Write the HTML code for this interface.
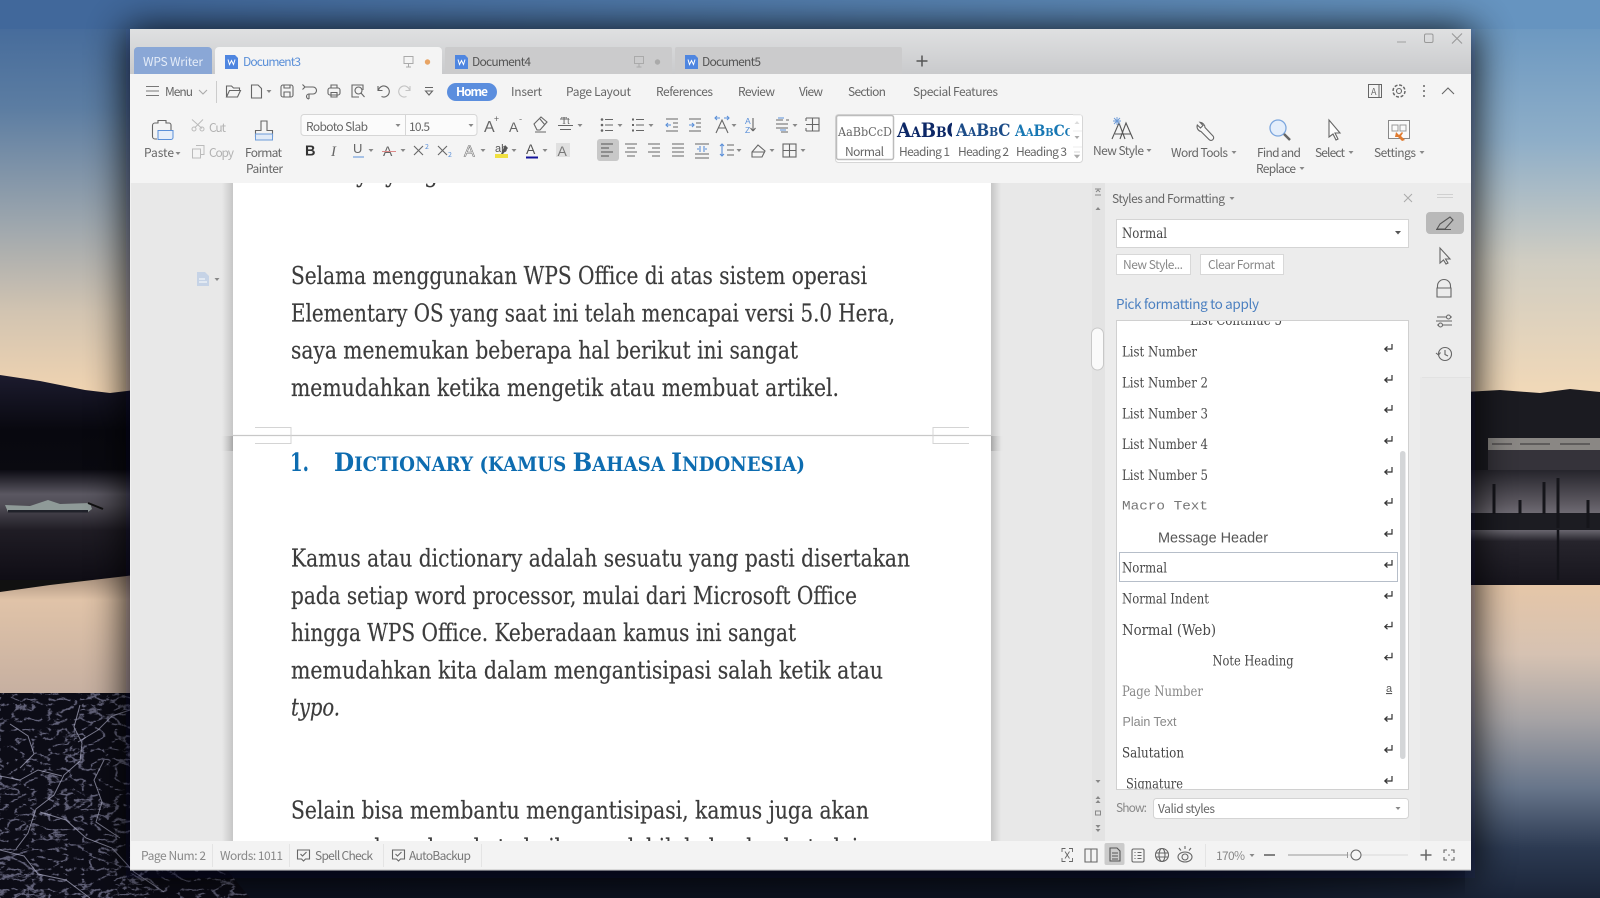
<!DOCTYPE html>
<html><head><meta charset="utf-8"><title>WPS Writer</title>
<style>
html,body{margin:0;padding:0;background:#111;overflow:hidden}
svg{display:block;filter:blur(.3px)}
text{font-family:"Noto Sans CJK SC","Liberation Sans",sans-serif;font-size:12px;fill:#666;white-space:pre}
.g{fill:#b2b2b2}
.d{font-family:"DejaVu Serif","Liberation Serif",serif;font-stretch:condensed;font-size:24px;fill:#3c3c3c;stroke:#3c3c3c;stroke-width:.18}
.s{font-family:"DejaVu Serif","Liberation Serif",serif;font-stretch:condensed;font-size:13.5px;fill:#484848}
.i{fill:none;stroke:#666;stroke-width:1.1}
.b{fill:none;stroke:#5a8fd8;stroke-width:1.1}
</style></head><body>
<svg width="1600" height="898" viewBox="0 0 1600 898" xmlns="http://www.w3.org/2000/svg">
<defs>
<linearGradient id="sl" x1="0" y1="0" x2="0" y2="1"><stop offset="0" stop-color="#3f6699"/><stop offset=".27" stop-color="#5c7da2"/><stop offset=".55" stop-color="#9ba5ad"/><stop offset=".78" stop-color="#d2c4b1"/><stop offset="1" stop-color="#f3d5b1"/></linearGradient>
<linearGradient id="sr" x1="0" y1="0" x2="0" y2="1"><stop offset="0" stop-color="#6493bf"/><stop offset=".35" stop-color="#8eaec8"/><stop offset=".65" stop-color="#d0cdc2"/><stop offset="1" stop-color="#f3d9b7"/></linearGradient>
<linearGradient id="top" x1="0" y1="0" x2="1" y2="0"><stop offset=".085" stop-color="#41689b"/><stop offset=".915" stop-color="#6694c0"/></linearGradient>
<linearGradient id="bot" x1="0" y1="0" x2="1" y2="0"><stop offset="0" stop-color="#0d111f"/><stop offset=".7" stop-color="#0e1524"/><stop offset=".915" stop-color="#1a2438"/></linearGradient>
<linearGradient id="ml" x1="0" y1="0" x2="0" y2="1"><stop offset="0" stop-color="#1c1b2e"/><stop offset=".55" stop-color="#08080f"/><stop offset="1" stop-color="#0a0a10"/></linearGradient>
<linearGradient id="wl" x1="0" y1="0" x2="0" y2="1"><stop offset="0" stop-color="#0c0b13"/><stop offset=".22" stop-color="#5a5761"/><stop offset=".32" stop-color="#504d56"/><stop offset=".55" stop-color="#1f1c24"/><stop offset="1" stop-color="#0f0d15"/></linearGradient>
<linearGradient id="pl" x1="0" y1="0" x2="0" y2="1"><stop offset="0" stop-color="#a48d7a"/><stop offset=".2" stop-color="#e0c3a8"/><stop offset="1" stop-color="#c4aea0"/></linearGradient>
<linearGradient id="wr" x1="0" y1="0" x2="0" y2="1"><stop offset="0" stop-color="#26252c"/><stop offset=".3" stop-color="#5f5b63"/><stop offset=".48" stop-color="#85828b"/><stop offset=".62" stop-color="#26242c"/><stop offset="1" stop-color="#17151d"/></linearGradient>
<linearGradient id="pr" x1="0" y1="0" x2="0" y2="1"><stop offset="0" stop-color="#e5c6a8"/><stop offset=".22" stop-color="#d6c2b2"/><stop offset=".43" stop-color="#a6a3a5"/><stop offset=".65" stop-color="#67758a"/><stop offset=".84" stop-color="#2c3a52"/><stop offset="1" stop-color="#1a2438"/></linearGradient>
<linearGradient id="tb" x1="0" y1="0" x2="0" y2="1"><stop offset="0" stop-color="#dfe0e1"/><stop offset="1" stop-color="#c9cacc"/></linearGradient>
<linearGradient id="ps" x1="0" y1="0" x2="1" y2="0"><stop offset="0" stop-color="#e8e8e8"/><stop offset="1" stop-color="#c6c6c6"/></linearGradient>
<linearGradient id="ps2" x1="1" y1="0" x2="0" y2="0"><stop offset="0" stop-color="#e8e8e8"/><stop offset="1" stop-color="#c6c6c6"/></linearGradient>
<linearGradient id="ps3" x1="0" y1="0" x2="1" y2="0"><stop offset="0" stop-color="#e8e8e8" stop-opacity="0"/><stop offset="1" stop-color="#a6a6a6"/></linearGradient>
<linearGradient id="ps4" x1="1" y1="0" x2="0" y2="0"><stop offset="0" stop-color="#e8e8e8" stop-opacity="0"/><stop offset="1" stop-color="#a6a6a6"/></linearGradient>
<filter id="bl" x="-10%" y="-10%" width="120%" height="120%"><feGaussianBlur stdDeviation="20"/></filter>
<filter id="cr" x="0" y="0" width="100%" height="100%" color-interpolation-filters="sRGB"><feTurbulence type="turbulence" baseFrequency=".06 .1" numOctaves="4" seed="7"/><feColorMatrix type="matrix" values="0 0 0 0 .72  0 0 0 0 .72  0 0 0 0 .86  -9 0 0 0 2"/></filter>
<clipPath id="cd"><rect x="233" y="183" width="758" height="658"/></clipPath>
<clipPath id="cl"><rect x="1117" y="321" width="291" height="468"/></clipPath>
<clipPath id="g1"><rect x="896" y="116" width="56" height="26"/></clipPath>
<clipPath id="g2"><rect x="955" y="116" width="55" height="26"/></clipPath>
<clipPath id="g3"><rect x="1014" y="116" width="56" height="26"/></clipPath>
<clipPath id="gr"><polygon points="0,693 130,693 170,800 250,898 0,898"/></clipPath>
<path id="c" d="M-2.5 -1 h5 l-2.5 3 z" fill="#888"/>
<path id="r" d="M4 -5 v5 h-7 M-.5 -2.500 l-2.700 2.500 l2.700 2.500" fill="none" stroke="#333" stroke-width="1.200"/>
</defs>

<!-- wallpaper -->
<rect x="0" y="0" width="135" height="400" fill="url(#sl)"/>
<rect x="1465" y="0" width="135" height="400" fill="url(#sr)"/>
<rect x="0" y="0" width="1600" height="29" fill="url(#top)"/>
<rect x="0" y="865" width="1600" height="33" fill="url(#bot)"/>
<polygon points="0,375 40,381 85,390 110,393 135,390 135,475 0,475" fill="url(#ml)"/>
<rect x="0" y="470" width="135" height="110" fill="url(#wl)"/>
<polygon points="0,592 50,585 135,575 135,700 0,700" fill="url(#pl)"/>
<rect x="0" y="693" width="260" height="205" fill="#0c0c16" clip-path="url(#gr)"/>
<rect x="0" y="693" width="260" height="205" filter="url(#cr)" clip-path="url(#gr)" opacity=".5"/>
<g fill="none" stroke="#b9b9d2" stroke-width="1" opacity=".65">
<path d="M80 705 l-6 22 l8 16 l-2 18 l-16 14 l-10 20 l-18 14 l-8 24 l-12 16"/>
<path d="M78 742 l20 -12 l14 -14 l18 -6"/>
<path d="M62 776 l-24 -6 l-18 10 l-20 -4"/>
<path d="M40 812 l26 8 l20 18 l26 10 l22 24 l30 20"/>
<path d="M0 850 l24 6 l14 18 l28 6 l24 18"/>
<path d="M104 760 l-10 20 l8 22 l-6 20 l24 16"/>
<path d="M10 724 l18 12 l6 18 l-14 14"/>
</g>
<polygon points="5,505 30,506 48,500 60,504 90,503 92,509 88,512 8,512" fill="#8f9a98"/>
<rect x="8" y="510" width="80" height="2.500" fill="#20222a"/>
<path d="M88 503 L103 509" stroke="#111" stroke-width="2"/>
<polygon points="1465,392 1500,390 1540,393 1570,389 1600,392 1600,480 1465,480" fill="#1b1b21"/>
<rect x="1465" y="470" width="135" height="115" fill="url(#wr)"/>
<rect x="1488" y="438" width="112" height="12" fill="#8a8784"/>
<path d="M1492 444 h20 M1520 444 h30 M1560 444 h30" stroke="#5f5c5c" stroke-width="2"/>
<rect x="1488" y="450" width="112" height="20" fill="#35333a"/>
<rect x="1465" y="513" width="135" height="17" fill="#1c1c22"/>
<path d="M1494 484 v30 M1544 482 v32 M1558 478 v50 M1588 500 v28 M1520 500 v14" stroke="#15151a" stroke-width="3"/>
<path d="M1558 530 v50" stroke="#121218" stroke-width="2.500"/>
<rect x="1465" y="585" width="135" height="313" fill="url(#pr)"/>
<rect x="126" y="29" width="1349" height="849" fill="#01040c" opacity=".9" filter="url(#bl)"/>

<!-- window -->
<rect x="130" y="29" width="1341" height="841" fill="#f1f1f1"/>
<rect x="130" y="29" width="1341" height="45" fill="url(#tb)"/>
<path d="M1397 42 h9" stroke="#aaa" stroke-width="1.200"/>
<rect x="1424.500" y="34" width="8.500" height="8.500" rx="1.500" fill="none" stroke="#999"/>
<path d="M1452 33.500 l10 10 M1462 33.500 l-10 10" stroke="#999" stroke-width="1.100"/>

<!-- tabs -->
<path d="M134 74 V51 a4 4 0 0 1 4 -4 h70 a4 4 0 0 1 4 4 V74 z" fill="#8aa7d6"/>
<text x="143" y="66" textLength="60" style="fill:#e4ecf8">WPS Writer</text>
<path d="M215 74 V51 a4 4 0 0 1 4 -4 h219 a4 4 0 0 1 4 4 V74 z" fill="#f4f4f4"/>
<path d="M225 55 h10 l3 3 v11 h-13 z" fill="#4f86e0"/><path d="M228 59.500 l1.500 5 l2 -4 l2 4 l1.500 -5" fill="none" stroke="#fff" stroke-width="1"/>
<text x="243" y="66" textLength="58" style="fill:#5a8fd8">Document3</text>
<path d="M404 56.500 h9 v7 h-9 z M408.500 63.500 v3 M406 67 h5" fill="none" stroke="#aaa"/>
<circle cx="427.500" cy="62" r="2.700" fill="#e8a464"/>
<path d="M445 74 V49 a2 2 0 0 1 2 -2 h223 a2 2 0 0 1 2 2 V74 z" fill="#cbcbcc"/>
<path d="M455 55 h10 l3 3 v11 h-13 z" fill="#4f86e0"/><path d="M458 59.500 l1.500 5 l2 -4 l2 4 l1.500 -5" fill="none" stroke="#fff" stroke-width="1"/>
<text x="472" y="66" textLength="59" style="fill:#555">Document4</text>
<path d="M634.500 56.500 h9 v7 h-9 z M639 63.500 v3 M636.500 67 h5" fill="none" stroke="#aaa"/>
<circle cx="657.500" cy="62" r="2.700" fill="#aaa"/>
<path d="M675 74 V49 a2 2 0 0 1 2 -2 h223 a2 2 0 0 1 2 2 V74 z" fill="#cbcbcc"/>
<path d="M685 55 h10 l3 3 v11 h-13 z" fill="#4f86e0"/><path d="M688 59.500 l1.500 5 l2 -4 l2 4 l1.500 -5" fill="none" stroke="#fff" stroke-width="1"/>
<text x="702" y="66" textLength="59" style="fill:#555">Document5</text>
<path d="M916.500 61 h11 M922 55.500 v11" stroke="#555" stroke-width="1.500"/>

<!-- ribbon -->
<rect x="130" y="74" width="1341" height="109" fill="#f4f4f4"/>
<path d="M146 86.500 h13 M146 91 h13 M146 95.500 h13" stroke="#777" stroke-width="1"/>
<text x="165" y="96" textLength="28">Menu</text>
<path d="M199 90 l4 4 l4 -4" class="i" style="stroke:#aaa"/>
<path d="M216.500 81 v22" stroke="#ccc"/>
<g class="i">
<path d="M226.500 97 V86 h5 l2 2 h6 v2.500 M226.500 97 h11 l3 -6.500 h-11 z"/>
<path d="M251.500 85 h6.500 l3.500 3.500 V98 h-10 z"/>
<rect x="281" y="85" width="12" height="12" rx="2"/><path d="M284 85 v3 h6 v-3 M284 97 v-5 h6 v5"/>
<path d="M305 87 h8 a3.500 3.500 0 0 1 0 7 h-4 v5 M302.500 84.500 l2.500 2.500 l-2.500 2.500 M309 94 a2.500 2.500 0 1 0 0 5"/>
<rect x="328" y="88" width="12" height="7" rx="2"/><path d="M331 88 v-3 h6 v3 M331 92.500 h6 v4.500 h-6 z"/>
<path d="M363 90 v-5 h-11 v12 h7"/><circle cx="358.500" cy="90.500" r="3.500"/><path d="M361 93 l3.500 4"/>
<path d="M378 86 v4.500 h4.500 M378.500 90 a5.500 5.500 0 1 1 3 6.500"/>
<path d="M410 86 v4.500 h-4.500 M409.500 90 a5.500 5.500 0 1 0 -3 6.500" style="stroke:#c4c4c4"/>
<path d="M425 87.500 h8 M425.500 91 l3.500 4 l3.500 -4 z"/>
</g>
<use href="#c" x="269" y="91"/>
<rect x="447" y="83" width="50" height="18" rx="9" fill="#5b8ede"/>
<text x="456" y="96" textLength="32" style="fill:#fff;font-weight:700">Home</text>
<text x="511" y="96" textLength="31">Insert</text>
<text x="566" y="96" textLength="65">Page Layout</text>
<text x="656" y="96" textLength="57">References</text>
<text x="738" y="96" textLength="37">Review</text>
<text x="799" y="96" textLength="24">View</text>
<text x="848" y="96" textLength="38">Section</text>
<text x="913" y="96" textLength="85">Special Features</text>
<!-- top right -->
<rect x="1368.500" y="84.500" width="13" height="13" fill="none" stroke="#666"/><path d="M1379 84.500 v13" stroke="#666"/>
<text x="1371" y="95" style="font-size:9px">A</text>
<circle cx="1399" cy="91" r="2.500" class="i"/><circle cx="1399" cy="91" r="6" fill="none" stroke="#666" stroke-dasharray="3 1.700" stroke-width="1.500"/>
<circle cx="1424" cy="86" r="1" fill="#666"/><circle cx="1424" cy="91" r="1" fill="#666"/><circle cx="1424" cy="96" r="1" fill="#666"/>
<path d="M1442 94 l6 -6 l6 6" class="i"/>

<!-- clipboard -->
<path d="M155 123 h3 v-2.500 h8 v2.500 h3 a2 2 0 0 1 2 2 v5 M155 123 a2.500 2.500 0 0 0 -2.500 2.500 v11 a2.500 2.500 0 0 0 2.500 2.500 h2" class="i"/>
<path d="M158 130.500 h15 v7 a2 2 0 0 1 -2 2 h-13 z" fill="#e6eef9" stroke="#5a8fd8"/>
<text x="144" y="157" textLength="30">Paste</text><use href="#c" x="178" y="153"/>
<path d="M192 119.500 l10 9 M203 119.500 l-8 8" stroke="#bbb" fill="none"/><circle cx="194" cy="129" r="2" fill="none" stroke="#bbb"/><circle cx="202" cy="129" r="2" fill="none" stroke="#bbb"/>
<text x="209" y="132" textLength="17" class="g">Cut</text>
<path d="M196 145.500 h8 v9 h-3 M192.500 149 h8 v9 h-8 z" fill="none" stroke="#bbb"/>
<text x="209" y="157" textLength="25" class="g">Copy</text>
<path d="M261 121 h6 v9.500 h5.500 v6 h-17 v-6 h5.500 z" class="i"/>
<path d="M255.500 134 h17 v6 h-17 z" fill="#e0eaf7" stroke="#6d9bd8"/>
<text x="245" y="157" textLength="37">Format</text>
<text x="246" y="173" textLength="37">Painter</text>

<!-- font row -->
<rect x="301" y="114.500" width="176" height="21" rx="3" fill="#fbfbfb" stroke="#d6d6d6"/><path d="M405.500 115 v20" stroke="#d6d6d6"/>
<text x="306" y="131" textLength="62">Roboto Slab</text><use href="#c" x="398" y="125"/>
<text x="409" y="131" textLength="21">10.5</text><use href="#c" x="471" y="125"/>
<text x="484" y="132" style="font-size:16px;font-family:'Liberation Sans'">A</text><text x="494" y="122" style="font-size:9px">+</text>
<text x="509" y="132" style="font-size:14px;font-family:'Liberation Sans'">A</text><text x="519" y="122" style="font-size:9px">-</text>
<path d="M534 124 l7 -7 l6 5 l-7 8 h-3 z M540 119 l5 6 M535 132 h11" class="i"/>
<text x="561" y="124" style="font-size:10px;font-family:'Liberation Serif'">Tt</text><path d="M558 125.500 h15 M560 129.500 h11 M560 119 h9" class="i" style="stroke-width:.9"/><use href="#c" x="580" y="125"/>
<text x="305" y="155.500" style="font-size:14.500px;font-weight:700;fill:#333;font-family:'Liberation Sans'">B</text>
<text x="331" y="156" style="font-size:15px;font-style:italic;font-family:'Liberation Serif'">I</text>
<text x="353" y="153" style="font-size:13px;font-family:'Liberation Sans'">U</text><path d="M353 157 h11" stroke="#5a8fd8"/><use href="#c" x="371" y="150"/>
<text x="383" y="156" style="font-size:14px;font-family:'Liberation Sans'">A</text><path d="M382 151.500 h14" stroke="#d88"/><use href="#c" x="403" y="150"/>
<path d="M414 146 l9 9 M423 146 l-9 9" class="i"/><text x="425" y="149" style="font-size:7px;fill:#5a8fd8">2</text>
<path d="M438 146 l9 9 M447 146 l-9 9" class="i"/><text x="448" y="157" style="font-size:7px;fill:#5a8fd8">2</text>
<text x="464" y="156.500" style="font-size:16px;font-family:'Liberation Sans';fill:#fafafa;stroke:#777;stroke-width:.6">A</text><use href="#c" x="483" y="150"/>
<text x="495" y="152" style="font-size:11px;font-family:'Liberation Sans';fill:#555">ab</text><path d="M495 154 h13 v4 h-13 z" fill="#f0e040"/><path d="M505 145 l3 3 l-5 6 h-2 z" fill="#555"/><use href="#c" x="514" y="150"/>
<text x="526" y="154" style="font-size:14px;font-family:'Liberation Sans';fill:#555">A</text><path d="M526 156.500 h12 v2 h-12 z" fill="#12129a"/><use href="#c" x="545" y="150"/>
<rect x="556" y="143" width="14" height="14" fill="#e0e0e0"/><text x="557.500" y="156" style="font-size:14px;font-family:'Liberation Sans';fill:#777">A</text>

<!-- paragraph row 1 -->
<g class="i">
<path d="M605 119.500 h8 M605 125 h8 M605 130.500 h8"/>
<path d="M636 119.500 h8 M636 125 h8 M636 130.500 h8"/>
<path d="M666 119 h12 M673 123 h5 M673 127 h5 M666 131 h12"/>
<path d="M689 119 h12 M696 123 h5 M696 127 h5 M689 131 h12"/>
<path d="M716 133 l6 -13 l6 13 M718.500 128 h7"/>
<path d="M753 118 v13 M753 131 l-2.500 -3 M753 131 l2.500 -3"/>
<path d="M776 120 h7 M786 120 h3 M776 124 h12 M776 128 h12 M781 132 h7"/>
<path d="M806 118 h13 v13 h-13 M812.500 118 v13 M806 118 v3 M806 128 v3 M806 124.500 h13"/>
<!-- row 2 -->
<path d="M625 144 h12 M627 148 h8 M625 152 h12 M627 156 h8"/>
<path d="M648 144 h12 M652 148 h8 M648 152 h12 M652 156 h8"/>
<path d="M672 144 h12 M672 148 h12 M672 152 h12 M672 156 h12"/>
<path d="M695 144 h14 M695 154 h14 M695 158 h14"/>
<path d="M727 145 h7 M727 150 h7 M727 155 h7"/>
<path d="M752 152 l6 -7 l7 6 l-3 6 h-10 z M752 152 h13"/>
<rect x="783" y="144" width="13" height="13"/><path d="M789.500 144 v13 M783 150.500 h13"/>
</g>
<g class="b">
<path d="M666 125 h5 M668 123 l-2 2 l2 2"/>
<path d="M694 125 h-5 M692 123 l2 2 l-2 2"/>
<path d="M715 118 h5 M717 116 l-2 2 l2 2 M729 118 h-5 M727 116 l2 2 l-2 2"/>
<path d="M778 118 h6 M786 130 h-6"/>
<path d="M697 149 h2 M705 149 h2 M700 146 v6 M704 146 v6"/>
<path d="M722 144 v12 M720 146 l2 -2 l2 2 M720 154 l2 2 l2 -2"/>
</g>
<text x="745" y="124" style="font-size:8.500px;fill:#5a8fd8;font-family:'Liberation Sans'">A</text><text x="745" y="133" style="font-size:8.500px;fill:#5a8fd8;font-family:'Liberation Sans'">Z</text>
<g fill="#666"><circle cx="602" cy="119.500" r="1.300"/><circle cx="602" cy="125" r="1.300"/><circle cx="602" cy="130.500" r="1.300"/><rect x="632" y="118.500" width="2" height="2"/><rect x="632" y="124" width="2" height="2"/><rect x="632" y="129.500" width="2" height="2"/></g>
<use href="#c" x="620" y="125"/><use href="#c" x="651" y="125"/><use href="#c" x="734" y="125"/><use href="#c" x="795" y="125"/><use href="#c" x="739" y="150"/><use href="#c" x="772" y="150"/><use href="#c" x="803" y="150"/>
<rect x="597" y="139" width="22" height="22" rx="3" fill="#c8c8c8"/>
<path d="M601 144 h12 M601 148 h8 M601 152 h12 M601 156 h8" fill="none" stroke="#555" stroke-width="1.100"/>

<!-- gallery -->
<rect x="835.500" y="114.500" width="247" height="48" rx="3" fill="#fff" stroke="#d6d6d6"/>
<rect x="836.500" y="115.500" width="57" height="44" rx="2" fill="#fff" stroke="#bcbcbc" stroke-width="1.500"/>
<text x="838" y="136" textLength="54" lengthAdjust="spacingAndGlyphs" class="s" style="font-size:12.500px;fill:#666">AaBbCcD</text>
<text x="845" y="156" textLength="39">Normal</text>
<g clip-path="url(#g1)"><text x="897" y="137" class="s" style="font-size:20px;font-weight:700;fill:#0c2766;font-variant:small-caps">AaBbCc</text></g>
<g clip-path="url(#g2)"><text x="956" y="136" class="s" style="font-size:17px;font-weight:700;fill:#1c4c88;font-variant:small-caps">AaBbCc</text></g>
<g clip-path="url(#g3)"><text x="1015" y="136" class="s" style="font-size:15.500px;font-weight:700;fill:#1878b4;font-variant:small-caps">AaBbCc</text></g>
<text x="899" y="156" textLength="51">Heading 1</text>
<text x="958" y="156" textLength="51">Heading 2</text>
<text x="1016" y="156" textLength="51">Heading 3</text>
<path d="M1073 115 h9 M1073 131 h9 M1073 147 h9" stroke="#eee"/>
<path d="M1074.500 124 l2.500 -3 l2.500 3 z" fill="#ddd"/><path d="M1074.500 136 l2.500 3 l2.500 -3 z" fill="#aaa"/><path d="M1074 152 h6 M1074.500 155 l2.500 3 l2.500 -3 z" fill="#aaa" stroke="#aaa" stroke-width=".6"/>

<!-- right ribbon -->
<path d="M1112 139 l7 -16 l6 16 M1115 134 h8 M1120 139 l6 -16 l7 16 M1122 134 h9" fill="none" stroke="#555" stroke-width="1.100"/>
<path d="M1117 117 v8 M1113 121 h8 M1114 118 l6 6 M1120 118 l-6 6" stroke="#6d9bd8" stroke-width=".9"/>
<text x="1093" y="155" textLength="51">New Style</text><use href="#c" x="1149" y="150"/>
<path d="M1200 122.300 L1203 125.500 L1200.500 128 L1197.300 125 A5 5 0 0 0 1201 131.500 L1209 139.500 A2.500 2.500 0 0 0 1213 136 L1205 127.500 A5.500 5.500 0 0 0 1200 122.300 z" fill="#f8f8f8" stroke="#666" stroke-width="1.100"/>
<text x="1171" y="157" textLength="57">Word Tools</text><use href="#c" x="1234" y="152"/>
<circle cx="1278" cy="128" r="8" fill="#e4eefb" stroke="#7ba6de" stroke-width="1.300"/><path d="M1284 134 l6 6" stroke="#666" stroke-width="2.500"/>
<text x="1257" y="157" textLength="44">Find and</text>
<text x="1256" y="173" textLength="40">Replace</text><use href="#c" x="1302" y="168"/>
<path d="M1329 120 l0 17 l4 -3 l3 6 l2 -1 l-3 -6 l5 0 z" fill="#fdfdfd" stroke="#666" stroke-width="1.100"/>
<text x="1315" y="157" textLength="30">Select</text><use href="#c" x="1351" y="152"/>
<rect x="1388.500" y="120.500" width="21" height="18" fill="#fafafa" stroke="#888"/><path d="M1392 125 h6 v6 h-6 z M1400 125 h6 v6 h-6 z" fill="none" stroke="#999"/>
<path d="M1396 132 l3 3 l3 -3 l1 1 l-2 3 l4 4 l-3 1 l-4 -4 h-3 z" fill="#e07b30"/>
<text x="1374" y="157" textLength="42">Settings</text><use href="#c" x="1422" y="152"/>

<!-- document area -->
<rect x="131" y="183" width="974" height="658" fill="#e8e8e8"/>
<rect x="222" y="183" width="11" height="658" fill="url(#ps)"/>
<rect x="991" y="183" width="10" height="658" fill="url(#ps2)"/>
<rect x="220" y="436" width="13" height="15" fill="url(#ps3)"/>
<rect x="991" y="436" width="13" height="15" fill="url(#ps4)"/>
<rect x="233" y="183" width="758" height="658" fill="#fff"/>
<path d="M197 272 h8 l4 4 v10 h-12 z" fill="#c6d3e6"/><path d="M199 279 h6 M199 282 h8" stroke="#fff"/>
<use href="#c" x="217" y="279"/>
<path d="M233 435.500 H991" stroke="#c8c8c8" stroke-width="1.200"/>
<path d="M255 427.500 H291 V443.500 H255 M969 427.500 H933 V443.500 H969" fill="none" stroke="#d4d4d4"/>
<g clip-path="url(#cd)">
<text class="d" x="385" y="182">y</text><text class="d" x="424" y="182">g</text><text class="d" x="356" y="182">y</text>
<text class="d" x="291" y="284" textLength="576" lengthAdjust="spacingAndGlyphs">Selama menggunakan WPS Office di atas sistem operasi</text>
<text class="d" x="291" y="321.300" textLength="604" lengthAdjust="spacingAndGlyphs">Elementary OS yang saat ini telah mencapai versi 5.0 Hera,</text>
<text class="d" x="291" y="358.600" textLength="507" lengthAdjust="spacingAndGlyphs">saya menemukan beberapa hal berikut ini sangat</text>
<text class="d" x="291" y="396" textLength="548" lengthAdjust="spacingAndGlyphs">memudahkan ketika mengetik atau membuat artikel.</text>
<text class="d" x="290" y="471" style="font-weight:700;fill:#0d6cb0;stroke:none;font-size:25px" textLength="19" lengthAdjust="spacingAndGlyphs">1.</text>
<text class="d" x="334" y="471" textLength="471" lengthAdjust="spacingAndGlyphs" style="font-weight:700;fill:#0d6cb0;stroke:none;text-transform:uppercase;font-size:25.500px">D<tspan style="font-size:20px">ictionary (kamus </tspan>B<tspan style="font-size:20px">ahasa </tspan>I<tspan style="font-size:20px">ndonesia)</tspan></text>
<text class="d" x="291" y="566.500" textLength="619" lengthAdjust="spacingAndGlyphs">Kamus atau dictionary adalah sesuatu yang pasti disertakan</text>
<text class="d" x="291" y="603.800" textLength="566" lengthAdjust="spacingAndGlyphs">pada setiap word processor, mulai dari Microsoft Office</text>
<text class="d" x="291" y="641" textLength="505" lengthAdjust="spacingAndGlyphs">hingga WPS Office. Keberadaan kamus ini sangat</text>
<text class="d" x="291" y="678.400" textLength="592" lengthAdjust="spacingAndGlyphs">memudahkan kita dalam mengantisipasi salah ketik atau</text>
<text class="d" x="291" y="715.700" textLength="49" lengthAdjust="spacingAndGlyphs" style="font-style:italic">typo.</text>
<text class="d" x="291" y="818.500" textLength="578" lengthAdjust="spacingAndGlyphs">Selain bisa membantu mengantisipasi, kamus juga akan</text>
<text class="d" x="291" y="855.800" textLength="580" lengthAdjust="spacingAndGlyphs">memperkaya kosakata baik yang lebih baku dan kata lain</text>
</g>

<!-- doc scrollbar -->
<rect x="1092" y="183" width="13" height="658" fill="#e3e3e3"/>
<rect x="1091.500" y="328" width="12" height="42" rx="6" fill="#fafafa" stroke="#c8c8c8"/>
<path d="M1095 189 h6 M1096 192 l2 -2 l2 2 M1095 195 h6" stroke="#888" fill="none"/>
<path d="M1095.500 210 l2.500 -3 l2.500 3 z" fill="#888"/><path d="M1095.500 780 l2.500 3 l2.500 -3 z" fill="#888"/>
<path d="M1095.500 799 l2.500 -3 l2.500 3 z M1095.500 803 l2.500 -3 l2.500 3 z" fill="#888"/>
<rect x="1095.500" y="811" width="5" height="4" fill="none" stroke="#888"/>
<path d="M1095.500 825 l2.500 3 l2.500 -3 z M1095.500 829 l2.500 3 l2.500 -3 z" fill="#888"/>

<!-- side panel -->
<rect x="1105" y="183" width="315" height="658" fill="#ececec"/>
<text x="1112" y="203" textLength="113">Styles and Formatting</text><use href="#c" x="1232" y="198"/>
<path d="M1404 194 l8 8 M1412 194 l-8 8" stroke="#aaa" stroke-width="1"/>
<rect x="1116.500" y="219.500" width="292" height="28" fill="#fff" stroke="#d4d4d4"/>
<text class="s" x="1122" y="238" textLength="45" lengthAdjust="spacingAndGlyphs">Normal</text>
<path d="M1395 231 h6 l-3 3.500 z" fill="#555"/>
<rect x="1116.500" y="254.500" width="74" height="20" fill="#fff" stroke="#d8d8d8"/>
<text x="1123" y="269" textLength="60" style="fill:#888">New Style...</text>
<rect x="1200.500" y="254.500" width="83" height="20" fill="#fff" stroke="#d8d8d8"/>
<text x="1208" y="269" textLength="67" style="fill:#888">Clear Format</text>
<text x="1116" y="309" textLength="143" style="font-size:13.500px;fill:#4a7fc0">Pick formatting to apply</text>
<rect x="1116.500" y="320.500" width="292" height="469" fill="#fff" stroke="#d0d0d0"/>
<g clip-path="url(#cl)">
<text class="s" x="1190" y="325" textLength="92" lengthAdjust="spacingAndGlyphs">List Continue 5</text>
<text class="s" x="1122" y="356.700" textLength="75" lengthAdjust="spacingAndGlyphs">List Number</text>
<text class="s" x="1122" y="387.500" textLength="86" lengthAdjust="spacingAndGlyphs">List Number 2</text>
<text class="s" x="1122" y="418.300" textLength="86" lengthAdjust="spacingAndGlyphs">List Number 3</text>
<text class="s" x="1122" y="449.200" textLength="86" lengthAdjust="spacingAndGlyphs">List Number 4</text>
<text class="s" x="1122" y="480" textLength="86" lengthAdjust="spacingAndGlyphs">List Number 5</text>
<text x="1122" y="509.500" textLength="86" lengthAdjust="spacingAndGlyphs" style="font-family:'Liberation Mono';font-size:13px;fill:#777">Macro Text</text>
<text x="1158" y="542.500" textLength="110" lengthAdjust="spacingAndGlyphs" style="font-family:'Liberation Sans';font-size:14.500px;fill:#555">Message Header</text>
<text class="s" x="1122" y="572.700" textLength="45" lengthAdjust="spacingAndGlyphs">Normal</text>
<text class="s" x="1122" y="603.700" textLength="87" lengthAdjust="spacingAndGlyphs">Normal Indent</text>
<text class="s" x="1122" y="634.800" textLength="94" lengthAdjust="spacingAndGlyphs" style="font-size:15px">Normal (Web)</text>
<text class="s" x="1212.500" y="665.300" textLength="81" lengthAdjust="spacingAndGlyphs">Note Heading</text>
<text class="s" x="1122" y="696" textLength="81" lengthAdjust="spacingAndGlyphs" style="fill:#888">Page Number</text>
<text x="1122.500" y="726" textLength="54" lengthAdjust="spacingAndGlyphs" style="font-family:'Liberation Sans';font-size:13px;fill:#888">Plain Text</text>
<text class="s" x="1122" y="757.700" textLength="62" lengthAdjust="spacingAndGlyphs" style="fill:#444">Salutation</text>
<text class="s" x="1126" y="788.500" textLength="57" lengthAdjust="spacingAndGlyphs">Signature</text>
</g>
<rect x="1119.500" y="552.500" width="278" height="29" fill="none" stroke="#b6bec9"/>
<g transform="translate(1388,0)">
<use href="#r" y="349"/><use href="#r" y="380"/><use href="#r" y="410"/><use href="#r" y="441"/><use href="#r" y="472"/><use href="#r" y="503"/><use href="#r" y="534"/><use href="#r" y="565"/><use href="#r" y="596"/><use href="#r" y="626.700"/><use href="#r" y="657.700"/><use href="#r" y="719"/><use href="#r" y="750"/><use href="#r" y="781"/>
</g>
<text x="1386" y="692" style="font-size:11px;fill:#555;text-decoration:underline;font-family:'Liberation Sans'">a</text>
<rect x="1400" y="451" width="5.500" height="308" rx="2.700" fill="#d4d6d8"/>
<text x="1116" y="812" textLength="31" style="fill:#888">Show:</text>
<rect x="1153.500" y="798.500" width="255" height="20" rx="3" fill="#fff" stroke="#d4d4d4"/>
<text x="1158" y="813" textLength="57">Valid styles</text><use href="#c" x="1398" y="808"/>

<!-- right bar -->
<rect x="1420" y="183" width="51" height="658" fill="#e9e9e9"/>
<rect x="1420" y="183" width="51" height="194" fill="#ececec"/><path d="M1422 377.500 h48" stroke="#e2e2e2"/>
<path d="M1437 194.500 h16 M1437 197.500 h16" stroke="#d0d0d0"/>
<rect x="1426" y="212" width="38" height="22" rx="4" fill="#b9b9b9"/>
<g class="i" style="stroke:#555">
<path d="M1437 229 l3 -5 l10 -7 l3 3 l-8 9 z M1436 229.500 h15"/>
<path d="M1440 248 l0 15 l3.500 -3 l2.500 4 l2 -1 l-2.500 -4 h4.500 z" style="stroke:#666"/>
<path d="M1437.500 288 v-2 a6.500 6.500 0 0 1 13 0 v2 M1437 288 h14 v9 h-14 z" style="stroke:#666"/>
<path d="M1437 317 h9 M1451 317 h1 M1437 325 h1 M1443 325 h9 M1436 321 h16" style="stroke:#666"/>
<circle cx="1448.500" cy="317" r="2" style="stroke:#666"/><circle cx="1440.500" cy="325" r="2" style="stroke:#666"/>
<circle cx="1445" cy="354" r="6.500" style="stroke:#666"/><path d="M1445 350 v4.500 l3 1.500 M1436 353 l2.500 2 l2 -2.500" style="stroke:#666"/>
</g>

<!-- status bar -->
<rect x="131" y="841" width="1340" height="28" fill="#f3f3f3"/>
<rect x="130" y="869" width="1341" height="1.500" fill="#d9d9d9"/>
<path d="M212.500 844 v23 M289.500 844 v23 M383.500 844 v23 M481.500 844 v23 M1205.500 844 v23" stroke="#e4e4e4"/>
<text x="141" y="860" textLength="65" style="fill:#888">Page Num: 2</text>
<text x="220" y="860" textLength="63" style="fill:#888">Words: 1011</text>
<path d="M297.500 850 h12 v9 h-4 l-2 2 l-2 -2 h-4 z M300.500 854 l2 2 l4 -4" class="i"/>
<text x="315" y="860" textLength="58" style="fill:#777">Spell Check</text>
<path d="M392.500 850 h12 v9 h-4 l-2 2 l-2 -2 h-4 z M395.500 854 l2 2 l4 -4" class="i"/>
<text x="409" y="860" textLength="62" style="fill:#777">AutoBackup</text>
<rect x="1104.500" y="843" width="20" height="22" rx="2" fill="#cbcbcb"/>
<g class="i">
<path d="M1062 852 v-3.500 h3.500 M1069 848.500 h3.500 v3.500 M1072.500 858 v3.500 h-3.500 M1065.500 861.500 h-3.500 v-3.500 M1065 851.500 l4.500 7 M1069.500 851.500 l-4.500 7" style="stroke-width:.9"/>
<path d="M1085 849 h12 v13 h-12 z M1091 849 v13"/>
<path d="M1110 848 h7 l3 3 v10 h-10 z M1112 853 h6 M1112 856 h6 M1112 859 h6" style="stroke:#555"/>
<rect x="1132" y="849" width="12" height="13" rx="1.500"/><path d="M1134.500 852.500 h1 M1137.500 852.500 h4 M1134.500 855.500 h1 M1137.500 855.500 h4 M1134.500 858.500 h1 M1137.500 858.500 h4"/>
<circle cx="1162" cy="855" r="6.500"/><ellipse cx="1162" cy="855" rx="3" ry="6.500"/><path d="M1155.500 853 h13 M1155.500 857 h13"/>
<ellipse cx="1185" cy="857" rx="7" ry="5"/><circle cx="1185" cy="857" r="3"/><path d="M1179 848 l2 2.500 M1185 846 v3 M1191 848 l-2 2.500"/>
</g>
<text x="1216" y="860" textLength="29" style="fill:#888">170%</text><use href="#c" x="1252" y="855"/>
<path d="M1264 855 h11" stroke="#666" stroke-width="1.600"/>
<path d="M1288 855 h60" stroke="#aaa" stroke-width="1.200"/><path d="M1348 855 h60" stroke="#d8d8d8"/><path d="M1347.500 852 v6" stroke="#999"/>
<circle cx="1356" cy="855" r="5" fill="#f6f6f6" stroke="#666"/>
<path d="M1420.500 855 h11 M1426 849.500 v11" stroke="#666" stroke-width="1.500"/>
<path d="M1444 853 v-3 h3 M1451 850 h3 v3 M1454 857 v3 h-3 M1447 860 h-3 v-3" class="i"/><circle cx="1449" cy="855" r=".8" fill="#666"/>
</svg>
</body></html>
